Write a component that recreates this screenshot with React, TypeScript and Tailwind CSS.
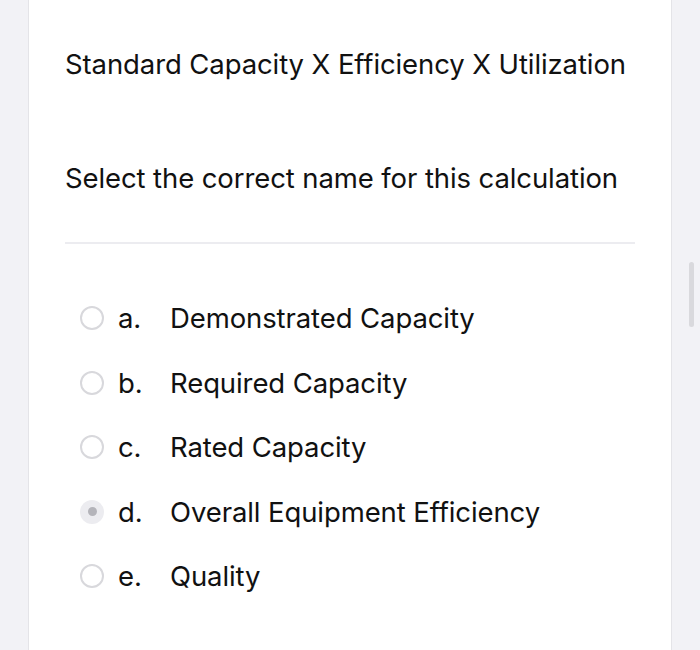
const OPTIONS = [
  { key: "a.", label: "Demonstrated Capacity", selected: false },
  { key: "b.", label: "Required Capacity", selected: false },
  { key: "c.", label: "Rated Capacity", selected: false },
  { key: "d.", label: "Overall Equipment Efficiency", selected: true },
  { key: "e.", label: "Quality", selected: false },
];

const Radio = ({ selected }: { selected: boolean }) =>
  selected ? (
    <span className="flex h-[24px] w-[24px] items-center justify-center rounded-full bg-[#ececf0]">
      <span className="h-[9px] w-[9px] rounded-full bg-[#b4b4ba]" />
    </span>
  ) : (
    <span className="h-[24px] w-[24px] rounded-full border-2 border-[#d8d8dc]" />
  );

const App = () => {
  return (
    <div className="relative h-[650px] w-[700px] overflow-hidden bg-[#f2f2f6] font-['Inter','Liberation_Sans',sans-serif] text-[#111]">
      <main className="ml-[28px] h-full w-[644px] border-x border-[#e4e4e8] bg-white px-[36px] pt-[48px]">
        <p className="text-[27.5px] leading-[32px] tracking-[-0.1px]">Standard Capacity X Efficiency X Utilization</p>
        <p className="mt-[82px] text-[27.5px] leading-[32px] tracking-[-0.1px]">Select the correct name for this calculation</p>
        <hr className="mt-[48px] border-t-2 border-[#ececf0]" />
        <ul className="mt-[42px] flex flex-col">
          {OPTIONS.map((option) => (
            <li key={option.key} className="flex h-[64.5px] items-center text-[27.5px] leading-[32px] tracking-[-0.1px]">
              <span className="ml-[15px] flex w-[38px] shrink-0">
                <Radio selected={option.selected} />
              </span>
              <span className="w-[52px] shrink-0">{option.key}</span>
              <span>{option.label}</span>
            </li>
          ))}
        </ul>
      </main>
      <div className="absolute left-[689px] top-[262px] h-[65px] w-[5px] rounded-full bg-[#d9d9dd]" />
    </div>
  );
};

export default App;
